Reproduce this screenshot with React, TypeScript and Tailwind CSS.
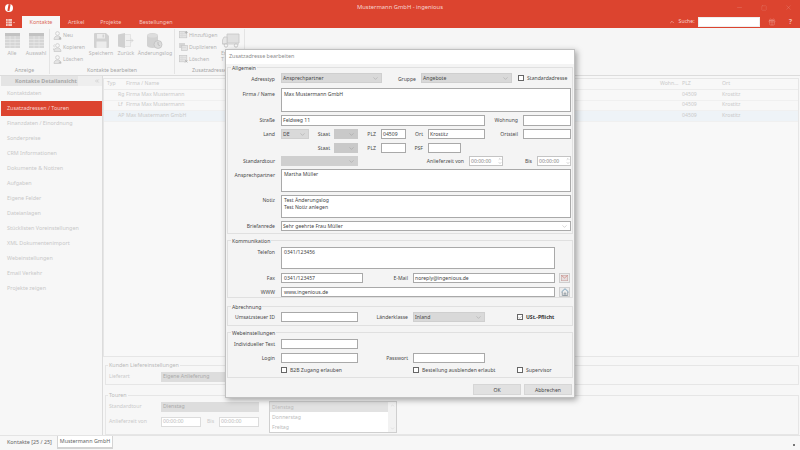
import React from "react";
import { Gift, Minus, Square, X, ChevronUp, ChevronDown, ChevronsLeft, Check } from "lucide-react";

const font = "font-['Noto_Sans',sans-serif]";

function GridIcon() {
  return (
    <svg width="15" height="15" viewBox="0 0 15 15">
      <rect x="0" y="0" width="15" height="15" fill="#d6d6d6" />
      <rect x="0" y="0" width="15" height="3" fill="#c2c2c2" />
      <path d="M0 6.5H15M0 9.5H15M0 12.5H15M5 3V15M10 3V15" stroke="#ececec" strokeWidth="0.6" />
    </svg>
  );
}

function FloppyIcon() {
  return (
    <svg width="15" height="15" viewBox="0 0 15 15">
      <path d="M0 1a1 1 0 0 1 1-1h11l3 3v11a1 1 0 0 1-1 1H1a1 1 0 0 1-1-1z" fill="#d2d2d2" />
      <rect x="3" y="1" width="8" height="4.5" fill="#ececec" />
      <rect x="2.5" y="8.5" width="10" height="6.5" fill="#ececec" />
      <rect x="8.5" y="1.5" width="1.6" height="3" fill="#d2d2d2" />
    </svg>
  );
}

function DoorIcon() {
  return (
    <svg width="16" height="15" viewBox="0 0 16 15">
      <path d="M0 1.5L7 0v15L0 13.5z" fill="#d0d0d0" />
      <path d="M7 1.5h5.5v12H7" fill="#f0f0f0" stroke="#dcdcdc" strokeWidth=".7" />
      <path d="M8 7.5h7M13 5.5l2 2-2 2" fill="none" stroke="#cfcfcf" strokeWidth=".7" />
    </svg>
  );
}

function LogIcon() {
  return (
    <svg width="16" height="16" viewBox="0 0 16 16">
      <path d="M0 2.5C0 1 2.5 0 5.5 0S11 1 11 2.5v10C11 14 8.5 15 5.5 15S0 14 0 12.5z" fill="#d2d2d2" />
      <ellipse cx="5.5" cy="2.5" rx="5" ry="2" fill="#dddddd" />
      <circle cx="11" cy="11.5" r="4" fill="#dcdcdc" stroke="#bdbdbd" strokeWidth=".7" />
      <path d="M11 9v2.7l1.8 1" fill="none" stroke="#a9a9a9" strokeWidth=".6" />
    </svg>
  );
}

function TruckIcon() {
  return (
    <svg width="18" height="15" viewBox="0 0 18 15">
      <path d="M5 1h12v9H5z" fill="#e0e0e0" stroke="#c6c6c6" strokeWidth=".8" />
      <path d="M5 4H2L.5 7v4h4.500z" fill="#e6e6e6" stroke="#c6c6c6" strokeWidth=".8" />
      <path d="M.5 11H17" stroke="#c6c6c6" strokeWidth=".8" />
      <circle cx="4" cy="12.500" r="1.700" fill="#f6f6f6" stroke="#bdbdbd" strokeWidth=".8" />
      <circle cx="14" cy="12.500" r="1.700" fill="#f6f6f6" stroke="#bdbdbd" strokeWidth=".8" />
    </svg>
  );
}

function PersonIcon({ kind }: { kind: "plus" | "two" | "minus" }) {
  return (
    <svg width="9" height="9" viewBox="0 0 9 9" fill="none" stroke="#c6c6c6" strokeWidth=".7">
      <circle cx="4.500" cy="2.500" r="1.900" />
      <path d="M1 8.500c0-2.300 1.500-3.600 3.500-3.600s3.500 1.300 3.500 3.600z" fill="#e4e4e4" />
      {kind === "two" && <path d="M1.500 1.500a1.500 1.500 0 0 0 0 2.500M.3 7C.3 6 .7 5.300 1.500 5" />}
      {kind === "plus" && <path d="M7 6v2.500M5.800 7.250h2.400" stroke="#aaaaaa" />}
      {kind === "minus" && <path d="M5.800 7.250h2.400" stroke="#aaaaaa" />}
    </svg>
  );
}

function TableSmall({ kind }: { kind: "plus" | "copy" | "del" }) {
  return (
    <svg width="9" height="8" viewBox="0 0 9 8">
      {kind === "copy" && <rect x="0" y="0" width="6" height="5" fill="#d6d6d6" />}
      <rect x={kind === "copy" ? 2.500 : 0.300} y={kind === "copy" ? 2.500 : 0.300} width={kind === "copy" ? 6 : 7.500} height={kind === "copy" ? 5 : 6.500} fill="#e4e4e4" stroke="#c4c4c4" strokeWidth=".6" />
      <path d="M1 2.500h6M1 4.500h6M3 1v5" stroke="#d0d0d0" strokeWidth=".4" />
      {kind === "plus" && <path d="M7.300 0v3M5.800 1.500h3" stroke="#b0b0b0" strokeWidth=".7" />}
      {kind === "del" && <path d="M6 5l2.500 2.500M8.500 5L6 7.500" stroke="#b0b0b0" strokeWidth=".7" />}
    </svg>
  );
}

function MailIcon() {
  return (
    <svg width="7" height="6" viewBox="0 0 7 6">
      <rect x=".3" y=".3" width="6.400" height="5.400" fill="#e6dede" stroke="#c9a3a0" strokeWidth=".6" />
      <path d="M.5.500l3 2.500 3-2.500" fill="none" stroke="#d0756c" strokeWidth=".6" />
    </svg>
  );
}

function HomeIcon() {
  return (
    <svg width="8" height="8" viewBox="0 0 8 8" fill="none">
      <path d="M.5 4L4 .7 7.500 4" stroke="#5d8fae" strokeWidth=".8" />
      <path d="M1.300 3.800V7.500h5.400V3.800" stroke="#6b7a84" strokeWidth=".6" />
      <path d="M3.200 7.500V5h1.600v2.500" stroke="#6b7a84" strokeWidth=".6" />
    </svg>
  );
}

function Lbl({ w, children, className = "" }: { w: number; children?: React.ReactNode; className?: string }) {
  return (
    <span style={{ width: w }} className={`shrink-0 text-right text-[#4a4a4a] whitespace-nowrap leading-[10px] ${className}`}>
      {children}
    </span>
  );
}

function Inp({ w, children, h = 10, className = "" }: { w: number; h?: number; children?: React.ReactNode; className?: string }) {
  return (
    <div style={{ width: w, height: h }} className={`shrink-0 bg-white border border-[#a9a9a9] px-[1px] text-[#444] leading-[8px] whitespace-pre-line overflow-hidden ${className}`}>
      {children}
    </div>
  );
}

function Sel({ w, children, className = "bg-[#d9d9d9] border-[#cfcfcf]" }: { w: number; children?: React.ReactNode; className?: string }) {
  return (
    <div style={{ width: w }} className={`shrink-0 h-[10px] border flex items-center justify-between pl-[1px] pr-[2px] text-[#444] leading-[8px] whitespace-nowrap ${className}`}>
      <span>{children}</span>
      <ChevronDown size={7} strokeWidth={1.2} className="text-[#888]" />
    </div>
  );
}

function Spin({ w, children }: { w: number; children?: React.ReactNode }) {
  return (
    <div style={{ width: w }} className="shrink-0 h-[10px] bg-white border border-[#c4c4c4] flex items-center justify-between pl-[1px] text-[#888] leading-[8px]">
      <span>{children}</span>
      <span className="flex flex-col">
        <ChevronUp size={4} strokeWidth={2} className="text-[#777]" />
        <ChevronDown size={4} strokeWidth={2} className="text-[#777]" />
      </span>
    </div>
  );
}

function Chk({ on = false }: { on?: boolean }) {
  return (
    <span className="shrink-0 w-[6px] h-[6px] bg-white border border-[#666] flex items-center justify-center">
      {on && <Check size={5} strokeWidth={2} className="text-[#444]" />}
    </span>
  );
}

function Group({ title, children, className = "" }: { title: string; children: React.ReactNode; className?: string }) {
  return (
    <div className={`relative border border-[#e0e0e0] ${className}`}>
      <span className="absolute left-[3px] top-[-4px] bg-[#f4f4f4] px-[1px] text-[#444] leading-[8px]">{title}</span>
      {children}
    </div>
  );
}

function Row({ children, h = 10, mt = 0 }: { children: React.ReactNode; h?: number; mt?: number }) {
  return (
    <div style={{ height: h, marginTop: mt }} className="flex items-start">
      {children}
    </div>
  );
}

function Gap({ w }: { w: number }) {
  return <span style={{ width: w }} className="shrink-0" />;
}

function Dialog() {
  return (
    <div className="absolute left-[225px] top-[49px] w-[350px] h-[349px] border border-[#c0c0c0] bg-[#f4f4f4] shadow-[2px_2px_6px_rgba(0,0,0,0.35)] flex flex-col text-[5.1px]">
      <div className="h-[14px] shrink-0 bg-white pl-[3px] pt-[2px] text-[#8c8c8c] text-[5.4px] leading-[8px]">Zusatzadresse bearbeiten</div>
      <div className="flex flex-col px-[1px] pt-[3px]">
        <Group title="Allgemein" className="h-[167px] pt-[5px]">
          <Row mt={0} h={11}>
            <Lbl w={47} className="pt-[1px]">Adresstyp</Lbl><Gap w={6} />
            <Sel w={101}>Ansprechpartner</Sel>
            <Lbl w={34} className="pt-[1px]">Gruppe</Lbl><Gap w={5} />
            <Sel w={91}>Angebote</Sel><Gap w={6} />
            <span className="mt-[2px]"><Chk /></span><Gap w={3} />
            <span className="leading-[10px] text-[#4a4a4a] whitespace-nowrap">Standardadresse</span>
          </Row>
          <Row mt={4} h={24}>
            <Lbl w={47} className="pt-[1px]">Firma / Name</Lbl><Gap w={6} />
            <Inp w={290} h={24} className="pt-[1px] pl-[2px]">Max Mustermann GmbH</Inp>
          </Row>
          <Row mt={3} h={11}>
            <Lbl w={47}>Straße</Lbl><Gap w={6} />
            <Inp w={204} h={11}>Feldweg 11</Inp>
            <Lbl w={33}>Wohnung</Lbl><Gap w={5} />
            <Inp w={48} h={11} />
          </Row>
          <Row mt={3}>
            <Lbl w={47}>Land</Lbl><Gap w={6} />
            <Sel w={28}>DE</Sel>
            <Lbl w={21}>Staat</Lbl><Gap w={4} />
            <Sel w={24} className="bg-[#c9c9c9] border-[#c9c9c9]" />
            <Lbl w={18}>PLZ</Lbl><Gap w={5} />
            <Inp w={25}>04509</Inp>
            <Lbl w={17}>Ort</Lbl><Gap w={5} />
            <Inp w={57}>Krostitz</Inp>
            <Lbl w={33}>Ortsteil</Lbl><Gap w={5} />
            <Inp w={48} />
          </Row>
          <Row mt={4}>
            <Gap w={53} /><Gap w={28} />
            <Lbl w={21}>Staat</Lbl><Gap w={4} />
            <Sel w={24} className="bg-[#c9c9c9] border-[#c9c9c9]" />
            <Lbl w={18}>PLZ</Lbl><Gap w={5} />
            <Inp w={25} />
            <Lbl w={17}>PSF</Lbl><Gap w={5} />
            <Inp w={33} />
          </Row>
          <Row mt={3}>
            <Lbl w={47}>Standardtour</Lbl><Gap w={6} />
            <Sel w={77} className="bg-[#cfcfcf] border-[#cfcfcf]" />
            <Lbl w={106}>Anlieferzeit von</Lbl><Gap w={5} />
            <Spin w={34}>00:00:00</Spin>
            <Lbl w={29}>Bis</Lbl><Gap w={5} />
            <Spin w={34}>00:00:00</Spin>
          </Row>
          <Row mt={3} h={23}>
            <Lbl w={47} className="pt-[1px]">Ansprechpartner</Lbl><Gap w={6} />
            <Inp w={290} h={23} className="pl-[2px]">Martha Müller</Inp>
          </Row>
          <Row mt={3} h={23}>
            <Lbl w={47}>Notiz</Lbl><Gap w={6} />
            <Inp w={290} h={23} className="pl-[2px] pt-[1px] !leading-[6.500px]">{"Test Änderungslog\nTest Notiz anlegen"}</Inp>
          </Row>
          <Row mt={3}>
            <Lbl w={47}>Briefanrede</Lbl><Gap w={6} />
            <Sel w={290} className="bg-white border-[#a9a9a9]">Sehr geehrte Frau Müller</Sel>
          </Row>
        </Group>
        <Group title="Kommunikation" className="mt-[6px] h-[58px] pt-[6px]">
          <Row h={22}>
            <Lbl w={47}>Telefon</Lbl><Gap w={6} />
            <Inp w={274} h={22} className="pl-[2px]">0341/123456</Inp>
          </Row>
          <Row mt={4}>
            <Lbl w={47}>Fax</Lbl><Gap w={6} />
            <Inp w={82} className="pl-[2px]">0341/123457</Inp>
            <Lbl w={45}>E-Mail</Lbl><Gap w={5} />
            <Inp w={142} className="pl-[1px]">noreply@ingenious.de</Inp><Gap w={4} />
            <span className="w-[11px] h-[10px] border border-[#cfcfcf] bg-[#ececec] flex items-center justify-center"><MailIcon /></span>
          </Row>
          <Row mt={4}>
            <Lbl w={47}>WWW</Lbl><Gap w={6} />
            <Inp w={274} className="pl-[2px]">www.ingenious.de</Inp><Gap w={4} />
            <span className="w-[11px] h-[10px] border border-[#cfcfcf] bg-[#ececec] flex items-center justify-center"><HomeIcon /></span>
          </Row>
        </Group>
        <Group title="Abrechnung" className="mt-[8px] h-[20px] pt-[5px]">
          <Row>
            <Lbl w={47}>Umsatzsteuer ID</Lbl><Gap w={6} />
            <Inp w={77} />
            <Lbl w={50}>Länderklasse</Lbl><Gap w={5} />
            <Sel w={72}>Inland</Sel><Gap w={32} />
            <span className="mt-[2px]"><Chk on /></span><Gap w={3} />
            <span className="leading-[10px] font-bold text-[#333] whitespace-nowrap">USt.-Pflicht</span>
          </Row>
        </Group>
        <Group title="Webeinstellungen" className="mt-[6px] h-[46px] pt-[6px]">
          <Row>
            <Lbl w={47}>Individueller Text</Lbl><Gap w={6} />
            <Inp w={77} />
          </Row>
          <Row mt={4}>
            <Lbl w={47}>Login</Lbl><Gap w={6} />
            <Inp w={77} />
            <Lbl w={50}>Passwort</Lbl><Gap w={5} />
            <Inp w={72} />
          </Row>
          <Row mt={3}>
            <Gap w={53} />
            <span className="mt-[1px]"><Chk /></span><Gap w={3} />
            <span className="w-[123px] shrink-0 text-[#4a4a4a] leading-[8px] whitespace-nowrap">B2B Zugang erlauben</span>
            <span className="mt-[1px]"><Chk /></span><Gap w={3} />
            <span className="w-[95px] shrink-0 text-[#4a4a4a] leading-[8px] whitespace-nowrap">Bestellung ausblenden erlaubt</span>
            <span className="mt-[1px]"><Chk /></span><Gap w={3} />
            <span className="text-[#4a4a4a] leading-[8px]">Supervisor</span>
          </Row>
        </Group>
        <div className="mt-[6px] flex justify-end gap-[3px] pr-[1px]">
          <div className="w-[48px] h-[11px] bg-[#e1e1e1] border border-[#d6d6d6] flex items-center justify-center text-[#444] leading-[8px]">OK</div>
          <div className="w-[48px] h-[11px] bg-[#e1e1e1] border border-[#d6d6d6] flex items-center justify-center text-[#444] leading-[8px]">Abbrechen</div>
        </div>
      </div>
    </div>
  );
}

function Small({ icon, label }: { icon: React.ReactNode; label: string }) {
  return (
    <div className="h-[12px] flex items-center gap-[1px] text-[#b4b4b4] whitespace-nowrap leading-[8px]">
      <span className="w-[10px] flex justify-center">{icon}</span>
      {label}
    </div>
  );
}

function Big({ icon, label, w }: { icon: React.ReactNode; label: React.ReactNode; w: number }) {
  return (
    <div style={{ width: w }} className="shrink-0 flex flex-col items-center text-[#b4b4b4] leading-[8px] whitespace-nowrap">
      <div className="h-[15px] flex items-center mb-[1px]">{icon}</div>
      {label}
    </div>
  );
}

function Section({ w, title, children }: { w: number; title: string; children: React.ReactNode }) {
  return (
    <div style={{ width: w }} className="shrink-0 h-full flex flex-col border-r border-[#e4e4e4]">
      <div className="flex-1 min-h-0 flex items-start pt-[4px]">{children}</div>
      <div className="text-center text-[#a4a4a4] leading-[8px] whitespace-nowrap">{title}</div>
    </div>
  );
}

const side = ["Finanzdaten / Einordnung", "Sonderpreise", "CRM Informationen", "Dokumente & Notizen", "Aufgaben", "Eigene Felder", "Dateianlagen", "Stücklisten Voreinstellungen", "XML Dokumentenimport", "Webeinstellungen", "Email Verkehr", "Projekte zeigen"];
const rows = [["Rg", "Firma Max Mustermann", false], ["Lf", "Firma Max Mustermann", false], ["AP", "Max Mustermann GmbH", true]] as const;

export default function App() {
  return (
    <div className={`relative w-[800px] h-[450px] overflow-hidden bg-[#f7f7f7] flex flex-col text-[5.2px] ${font}`}>
      <header className="h-[28px] shrink-0 bg-[#dc442f] flex flex-col text-white">
        <div className="h-[15px] flex items-center relative">
          <span className="ml-[5px] w-[8px] h-[8px] rounded-full bg-white flex items-center justify-center">
            <span className="w-[1.5px] h-[7px] bg-[#dc442f] rotate-[10deg]" />
          </span>
          <span className="absolute left-0 right-0 text-center text-[5.8px] text-[#f7d5cf]">Mustermann GmbH - ingenious</span>
          <div className="ml-auto flex items-center gap-[18px] pr-[8px] text-[#eb958a]">
            <Minus size={7} strokeWidth={1} />
            <Square size={6} strokeWidth={1} />
            <X size={7} strokeWidth={1} />
          </div>
        </div>
        <div className="h-[13px] flex items-end">
          <span className="w-[22px] h-[12px] flex items-center pl-[6px]">
            <svg width="9" height="7" viewBox="0 0 9 7"><rect width="6" height="7" fill="#f5c9c2" /><path d="M0 2.300H6M0 4.600H6M2 0V7" stroke="#dc442f" strokeWidth=".5" /><path d="M7 3h2L8 4.200z" fill="#f5c9c2" /></svg>
          </span>
          <span className="w-[38px] h-[12px] bg-[#f7f7f7] flex items-center justify-center text-[#dc6a58] text-[5.4px] leading-[8px]">Kontakte</span>
          <span className="ml-[8px] h-[12px] flex items-center text-[5.4px] text-[#f5c9c2]">Artikel</span>
          <span className="ml-[16px] h-[12px] flex items-center text-[5.4px] text-[#f5c9c2]">Projekte</span>
          <span className="ml-[18px] h-[12px] flex items-center text-[5.4px] text-[#f5c9c2]">Bestellungen</span>
          <div className="ml-auto h-[12px] flex items-center pr-[8px]">
            <ChevronUp size={6} strokeWidth={2} className="text-[#f7d5cf]" />
            <span className="ml-[4px] text-[#f7d5cf]">Suche:</span>
            <span className="ml-[3px] w-[62px] h-[10px] bg-white border border-[#eee] mb-[1px]" />
            <Gift size={8} strokeWidth={1} className="ml-[8px] text-[#f2b6ac]" />
            <span className="ml-[13px] text-[7px] text-[#f2b6ac] font-bold leading-[8px]">?</span>
          </div>
        </div>
      </header>
      <div className="h-[48px] shrink-0 flex border-b border-[#dcdcdc] bg-[#f6f6f6] py-[1px]">
        <Section w={50} title="Anzeige">
          <Big w={24} icon={<GridIcon />} label="Alle" />
          <Big w={24} icon={<GridIcon />} label="Auswahl" />
        </Section>
        <Section w={125} title="Kontakte bearbeiten">
          <div className="w-[37px] ml-[2px] -mt-[4px]">
            <Small icon={<PersonIcon kind="plus" />} label="Neu" />
            <Small icon={<PersonIcon kind="two" />} label="Kopieren" />
            <Small icon={<PersonIcon kind="minus" />} label="Löschen" />
          </div>
          <Big w={24} icon={<FloppyIcon />} label="Speichern" />
          <Big w={26} icon={<DoorIcon />} label="Zurück" />
          <Big w={32} icon={<LogIcon />} label="Änderungslog" />
        </Section>
        <Section w={70} title="Zusatzadresse">
          <div className="w-[43px] ml-[3px] -mt-[4px]">
            <Small icon={<TableSmall kind="plus" />} label="Hinzufügen" />
            <Small icon={<TableSmall kind="copy" />} label="Duplizieren" />
            <Small icon={<TableSmall kind="del" />} label="Löschen" />
          </div>
          <div className="w-[20px] flex flex-col items-start text-[#b4b4b4] leading-[6px]">
            <div className="w-[20px] h-[15px] flex items-center justify-center mb-[2px]"><TruckIcon /></div>
            <span>En</span>
            <span>T</span>
          </div>
        </Section>
      </div>
      <div className="flex-1 min-h-0 flex">
        <aside className="w-[102px] shrink-0 ml-[1px] border-r border-[#dcdcdc] flex flex-col text-[#c8c8c8] text-[5.4px]">
          <div className="h-[10px] bg-[#eeeeee] flex items-center justify-between pr-[2px] text-[#a8a8a8] font-bold leading-[8px]">
            <span className="w-[77px] h-full bg-[#e4e4e4] pl-[14px] flex items-center whitespace-nowrap">Kontakte Detailansicht</span>
            <ChevronsLeft size={6} strokeWidth={1.5} />
          </div>
          <div className="h-[15px] flex items-center pl-[6px]">Kontaktdaten</div>
          <div className="h-[15px] flex items-center pl-[6px] bg-[#dc442f] text-[#f7d5cf]">Zusatzadressen / Touren</div>
          {side.map((s) => (
            <div key={s} className="h-[15px] flex items-center pl-[6px] whitespace-nowrap">{s}</div>
          ))}
        </aside>
        <main className="flex-1 min-w-0 flex flex-col text-[#cacaca]">
          <div className="h-[279px] shrink-0 mt-[2px] mr-[1px] border border-[#e6e6e6] bg-[#f8f8f8]">
            <div className="h-[11px] flex items-center border-b border-[#ececec]">
              <span className="w-[22px] pl-[3px]">Typ</span>
              <span className="w-[534px]">Firma / Name</span>
              <span className="w-[22px]">Wohn...</span>
              <span className="w-[40px]">PLZ</span>
              <span>Ort</span>
            </div>
            {rows.map(([t, n, hi]) => (
              <div key={t} className={`h-[10.500px] flex items-center border-b border-[#f0f0f0] ${hi ? "bg-[#eef3f7]" : ""}`}>
                <span className="w-[22px] pl-[14px] pr-0 whitespace-nowrap">{t}</span>
                <span className="w-[534px]">{n}</span>
                <span className="w-[22px]" />
                <span className="w-[40px]">04509</span>
                <span>Krostitz</span>
              </div>
            ))}
          </div>
          <div className="relative mt-[8px] h-[20px] shrink-0 ml-[2px] mr-[1px] border border-[#e6e6e6] flex items-center pl-[3px] pt-[3px]">
            <span className="absolute left-[2px] top-[-5px] bg-[#f7f7f7] px-[1px] text-[#b9b9b9] text-[5.4px] leading-[8px]">Kunden Liefereinstellungen</span>
            <span className="w-[52px]">Lieferart</span>
            <span className="w-[180px] h-[10px] bg-[#dddddd] pl-[2px] text-[#aaa] flex items-center">Eigene Anlieferung</span>
          </div>
          <div className="relative mt-[10px] flex-1 ml-[2px] mr-[1px] border border-[#e6e6e6] flex">
            <span className="absolute left-[2px] top-[-5px] bg-[#f7f7f7] px-[1px] text-[#b9b9b9] text-[5.4px] leading-[8px]">Touren</span>
            <div className="w-[160px] shrink-0 pt-[6px] pl-[3px]">
              <div className="flex items-center h-[10px]">
                <span className="w-[52px] shrink-0">Standardtour</span>
                <span className="w-[98px] shrink-0 h-[10px] bg-[#dddddd] pl-[2px] text-[#aaa] flex items-center">Dienstag</span>
              </div>
              <div className="flex items-center h-[10px] mt-[5px]">
                <span className="w-[52px] shrink-0">Anlieferzeit von</span>
                <span className="w-[40px] shrink-0 h-[10px] border border-[#dcdcdc] bg-white pl-[1px] text-[#bbb] flex items-center">00:00:00</span>
                <span className="ml-[6px] w-[12px] shrink-0">Bis</span>
                <span className="w-[40px] shrink-0 h-[10px] border border-[#dcdcdc] bg-white pl-[1px] text-[#bbb] flex items-center">00:00:00</span>
              </div>
            </div>
            <div className="absolute left-[163px] top-[5px] w-[128px] h-[32px] border border-[#cfcfcf] bg-white text-[#bbb] leading-[8px] flex">
              <div className="flex-1 flex flex-col">
                <span className="h-[10px] bg-[#e2e2e2] flex items-center pl-[2px]">Dienstag</span>
                <span className="h-[10px] flex items-center pl-[2px]">Donnerstag</span>
                <span className="h-[10px] flex items-center pl-[2px]">Freitag</span>
              </div>
              <span className="w-[8px] bg-[#f2f2f2] flex flex-col justify-between items-center py-[1px] text-[#ccc]">
                <ChevronUp size={5} strokeWidth={2} />
                <ChevronDown size={5} strokeWidth={2} />
              </span>
            </div>
          </div>
        </main>
      </div>
      <footer className="h-[15px] shrink-0 border-t border-[#e4e4e4] bg-[#f7f7f7] flex items-start text-[#666] text-[5.4px]">
        <span className="ml-[7px] w-[50px] h-[13px] flex items-center">Kontakte [25 / 25]</span>
        <span className="w-[56px] h-[13px] bg-white border-x border-b-2 border-[#d4d4d4] flex items-center justify-center">Mustermann GmbH</span>
        <span className="ml-auto mr-[5px] mt-[8px] w-[2px] h-[2px] bg-[#777]" />
      </footer>
      <Dialog />
    </div>
  );
}
